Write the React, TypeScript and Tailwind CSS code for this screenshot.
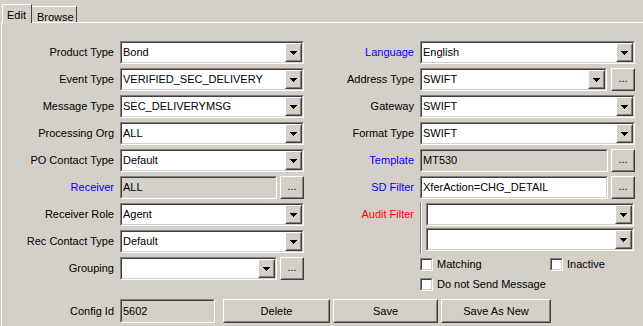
import React from "react";

const Sunken = ({ className = "", bg = "bg-white", children }: { className?: string; bg?: string; children?: React.ReactNode }) => (
    <div className={`border border-t-[#808080] border-l-[#808080] border-b-white border-r-white ${className}`}>
        <div className={`h-full w-full border border-t-[#404040] border-l-[#404040] border-b-[#d4d0c8] border-r-[#d4d0c8] flex items-center ${bg}`}>
            {children}
        </div>
    </div>
);

const Raised = ({ className = "", children }: { className?: string; children?: React.ReactNode }) => (
    <div className={`border border-t-white border-l-white border-b-[#404040] border-r-[#404040] bg-[#d4d0c8] ${className}`}>
        <div className="h-full w-full border border-t-[#d4d0c8] border-l-[#d4d0c8] border-b-[#808080] border-r-[#808080] flex items-center justify-center">
            {children}
        </div>
    </div>
);

const Arrow = () => (
    <svg width="7" height="4" viewBox="0 0 7 4" shapeRendering="crispEdges">
        <polygon points="0,0 7,0 3.5,4" fill="#000" />
    </svg>
);

const Combo = ({ value = "", width }: { value?: string; width: string }) => (
    <Sunken className={`${width} h-[23px]`}>
        <div className="flex-1 pl-[1px] whitespace-nowrap overflow-hidden">{value}</div>
        <Raised className="w-[17px] h-[19px]">
            <Arrow />
        </Raised>
    </Sunken>
);

const TextField = ({ value = "", width, disabled }: { value?: string; width: string; disabled?: boolean }) => (
    <Sunken className={`${width} h-[23px]`} bg={disabled ? "bg-[#d4d0c8]" : "bg-white"}>
        <div className="pl-[1px] whitespace-nowrap">{value}</div>
    </Sunken>
);

const Dots = () => (
    <Raised className="w-[24px] h-[23px]">
        <span className="leading-none pb-[2px]">...</span>
    </Raised>
);

const Label = ({ text, color = "text-black", width }: { text: string; color?: string; width: string }) => (
    <div className={`${width} mr-[6px] text-right whitespace-nowrap ${color}`}>{text}</div>
);

const Row = ({ children }: { children: React.ReactNode }) => (
    <div className="flex items-center h-[23px]">{children}</div>
);

const Check = ({ label }: { label: string }) => (
    <div className="flex items-center h-[14px]">
        <Sunken className="w-[13px] h-[13px]" />
        <span className="ml-[4px]">{label}</span>
    </div>
);

export default function App() {
    const lw = "w-[112px]";
    const rw = "w-[110px]";
    return (
        <div
            className="w-[643px] h-[326px] bg-[#d4d0c8] overflow-hidden text-[11px] text-black"
            style={{ fontFamily: '"Liberation Sans", Arial, sans-serif' }}
        >
            {/* tabs */}
            <div className="flex items-end h-[22px] pl-[2px]">
                <div className="relative z-10 h-[19px] -mb-[1px] w-[30px] bg-[#d4d0c8] border-l border-t border-white rounded-tl-[2px] border-r border-r-[#404040] pl-[4px] pt-[2px]">
                    Edit
                </div>
                <div className="h-[16px] w-[45px] border-t border-white border-r border-r-[#404040] pl-[5px] pt-[2px]">
                    Browse
                </div>
            </div>

            <div className="ml-[1px] border-t border-l border-white h-[304px] pt-[18px]">
                <div className="flex">
                    {/* left column */}
                    <div className="w-[302px] flex flex-col gap-[4px]">
                        <Row><Label width={lw} text="Product Type" /><Combo width="w-[184px]" value="Bond" /></Row>
                        <Row><Label width={lw} text="Event Type" /><Combo width="w-[184px]" value="VERIFIED_SEC_DELIVERY" /></Row>
                        <Row><Label width={lw} text="Message Type" /><Combo width="w-[184px]" value="SEC_DELIVERYMSG" /></Row>
                        <Row><Label width={lw} text="Processing Org" /><Combo width="w-[184px]" value="ALL" /></Row>
                        <Row><Label width={lw} text="PO Contact Type" /><Combo width="w-[184px]" value="Default" /></Row>
                        <Row>
                            <Label width={lw} text="Receiver" color="text-[#0000ff]" />
                            <TextField width="w-[157px]" value="ALL" disabled />
                            <div className="ml-[3px]"><Dots /></div>
                        </Row>
                        <Row><Label width={lw} text="Receiver Role" /><Combo width="w-[184px]" value="Agent" /></Row>
                        <Row><Label width={lw} text="Rec Contact Type" /><Combo width="w-[184px]" value="Default" /></Row>
                        <Row>
                            <Label width={lw} text="Grouping" />
                            <Combo width="w-[157px]" />
                            <div className="ml-[3px]"><Dots /></div>
                        </Row>
                    </div>

                    {/* right column */}
                    <div className="flex flex-col">
                        <div className="flex flex-col gap-[4px]">
                            <Row><Label width={rw} text="Language" color="text-[#0000ff]" /><Combo width="w-[215px]" value="English" /></Row>
                            <Row>
                                <Label width={rw} text="Address Type" />
                                <Combo width="w-[187px]" value="SWIFT" />
                                <div className="ml-[4px]"><Dots /></div>
                            </Row>
                            <Row><Label width={rw} text="Gateway" /><Combo width="w-[215px]" value="SWIFT" /></Row>
                            <Row><Label width={rw} text="Format Type" /><Combo width="w-[215px]" value="SWIFT" /></Row>
                            <Row>
                                <Label width={rw} text="Template" color="text-[#0000ff]" />
                                <TextField width="w-[188px]" value="MT530" disabled />
                                <div className="ml-[3px]"><Dots /></div>
                            </Row>
                            <Row>
                                <Label width={rw} text="SD Filter" color="text-[#0000ff]" />
                                <TextField width="w-[188px]" value="XferAction=CHG_DETAIL" />
                                <div className="ml-[3px]"><Dots /></div>
                            </Row>
                        </div>
                        <div className="flex mt-[3px]">
                            <div className={`${rw} mr-[6px] text-right text-[#ff0000] h-[23px] flex items-center justify-end mt-[1px]`}>
                                Audit Filter
                            </div>
                            <div className="flex">
                                <div className="w-[1px] h-[52px] bg-[#808080]" />
                                <div className="w-[1px] h-[52px] bg-white" />
                                <div className="flex flex-col gap-[2px] pl-[4px] pt-[1px]">
                                    <Combo width="w-[208px]" />
                                    <Combo width="w-[208px]" />
                                </div>
                            </div>
                        </div>
                        <div className="ml-[116px] mt-[3px] flex flex-col gap-[6px]">
                            <div className="flex">
                                <div className="w-[130px]"><Check label="Matching" /></div>
                                <Check label="Inactive" />
                            </div>
                            <Check label="Do not Send Message" />
                        </div>
                    </div>
                </div>

                {/* bottom row */}
                <div className="flex items-center mt-[8px]">
                    <Label width={lw} text="Config Id" />
                    <Sunken className="w-[95px] h-[24px]" bg="bg-[#d4d0c8]">
                        <div className="pl-[1px]">5602</div>
                    </Sunken>
                    <Raised className="ml-[8px] w-[107px] h-[24px]">Delete</Raised>
                    <Raised className="ml-[3px] w-[105px] h-[24px]">Save</Raised>
                    <Raised className="ml-[3px] w-[110px] h-[24px]">Save As New</Raised>
                </div>
            </div>
        </div>
    );
}
